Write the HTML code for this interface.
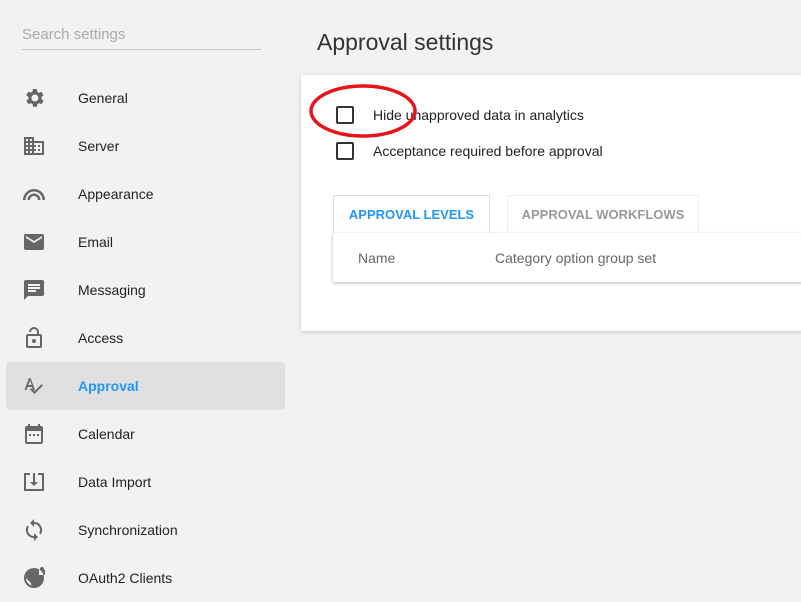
<!DOCTYPE html>
<html><head><meta charset="utf-8"><style>
*{margin:0;padding:0;box-sizing:border-box}
body{width:801px;height:584px;overflow:hidden;background:#f2f2f2;font-family:"Liberation Sans",Arial,sans-serif;position:relative;color:#222}
.search{position:absolute;left:22px;top:26px;font-size:15px;color:#aaa}
.sline{position:absolute;left:22px;top:49px;width:239px;height:1px;background:#c4c4c4}
.item{position:absolute;left:6px;width:279px;height:48px;font-size:14px;color:#222}
.item span{position:absolute;left:72px;top:16px}
.item svg{position:absolute;left:16px;top:12px;width:24px;height:24px;fill:#666}
.item.sel{background:#e0e0e0;border-radius:4px}
.item.sel span{color:#2196f3;font-weight:bold}
h1{position:absolute;left:317px;top:29px;font-size:23px;font-weight:normal;color:#333}
.card{position:absolute;left:301px;top:75px;width:510px;height:256px;background:#fff;box-shadow:0 1px 4px rgba(0,0,0,.2)}
.cb{position:absolute;width:18px;height:18px;border:2px solid #333;border-radius:2px}
.lbl{position:absolute;font-size:14px;color:#222}
.tab{position:absolute;top:195px;height:39px;background:#fff;border:1px solid #ddd;border-bottom:none;font-size:13px;font-weight:bold;text-align:center;line-height:38px}
.tbl{position:absolute;left:333px;top:233px;width:480px;height:49px;background:#fff;box-shadow:0 1px 3px rgba(0,0,0,.3)}
.th{position:absolute;top:250px;font-size:14px;color:#666}
</style></head><body>
<div class="search">Search settings</div><div class="sline"></div>
<div class="item" style="top:74px"><svg viewBox="0 0 24 24"><path d="M19.4 13a7.5 7.5 0 000-2l2.1-1.6-2-3.5-2.5 1a7.6 7.6 0 00-1.700-1L14.9 3h-4l-.4 2.6a7.6 7.6 0 00-1.7 1l-2.5-1-2 3.5L6.5 11a7.5 7.5 0 000 2l-2.1 1.6 2 3.5 2.5-1a7.6 7.6 0 001.7 1l.4 2.6h4l.4-2.6a7.6 7.6 0 001.7-1l2.5 1 2-3.5zM12.9 15.5a3.5 3.5 0 110-7 3.5 3.5 0 010 7z"/></svg><span>General</span></div>
<div class="item" style="top:122px"><svg viewBox="0 0 24 24"><path d="M12 7V3H2v18h20V7H12zM6 19H4v-2h2v2zm0-4H4v-2h2v2zm0-4H4V9h2v2zm0-4H4V5h2v2zm4 12H8v-2h2v2zm0-4H8v-2h2v2zm0-4H8V9h2v2zm0-4H8V5h2v2zm10 12h-8v-2h2v-2h-2v-2h2v-2h-2V9h8v10zm-2-8h-2v2h2v-2zm0 4h-2v2h2v-2z"/></svg><span>Server</span></div>
<div class="item" style="top:170px"><svg viewBox="0 0 24 24"><path d="M1 18a11 11 0 0122 0h-2.5a8.5 8.5 0 00-17 0zM5.5 18a6.5 6.5 0 0113 0H16a4 4 0 00-8 0z"/></svg><span>Appearance</span></div>
<div class="item" style="top:218px"><svg viewBox="0 0 24 24"><path d="M20 4H4a2 2 0 00-2 2v12a2 2 0 002 2h16a2 2 0 002-2V6a2 2 0 00-2-2zm0 4l-8 5-8-5V6l8 5 8-5z"/></svg><span>Email</span></div>
<div class="item" style="top:266px"><svg viewBox="0 0 24 24"><path d="M20 2H4a2 2 0 00-2 2v18l4-4h14a2 2 0 002-2V4a2 2 0 00-2-2zM6 9h12v2H6zm8 5H6v-2h8zm4-6H6V6h12z"/></svg><span>Messaging</span></div>
<div class="item" style="top:314px"><svg viewBox="0 0 24 24"><path d="M12 17a2 2 0 100-4 2 2 0 000 4zm6-9h-1V6a5 5 0 00-10 0h2a3 3 0 016 0v2H6a2 2 0 00-2 2v10a2 2 0 002 2h12a2 2 0 002-2V10a2 2 0 00-2-2zm0 12H6V10h12z"/></svg><span>Access</span></div>
<div class="item sel" style="top:362px"><svg viewBox="0 0 24 24"><path d="M2.5 16L7 4h1.5l4.5 12h-2l-1.1-3H5.6l-1.1 3zm3.8-5h3.4L8 6.3zM21 11.5l-8.5 8.5L8 15.5l1.4-1.4 3.1 3.1 7.1-7.1z"/></svg><span>Approval</span></div>
<div class="item" style="top:410px"><svg viewBox="0 0 24 24"><path d="M19 4h-1V2h-2v2H8V2H6v2H5a2 2 0 00-2 2v14a2 2 0 002 2h14a2 2 0 002-2V6a2 2 0 00-2-2zm0 16H5V9h14zM7 12h2v2H7zm4 0h2v2h-2zm4 0h2v2h-2z"/></svg><span>Calendar</span></div>
<div class="item" style="top:458px"><svg viewBox="0 0 24 24"><path d="M2 3h6v2H4v14h16V5h-4V3h6v18H2zm9 0h2v9h3l-4 4-4-4h3z"/></svg><span>Data Import</span></div>
<div class="item" style="top:506px"><svg viewBox="0 0 24 24"><path d="M12 4V1L8 5l4 4V6a6 6 0 015.2 9l1.5 1.5A8 8 0 0012 4zm0 14a6 6 0 01-5.2-9L5.3 7.5A8 8 0 0012 20v3l4-4-4-4z"/></svg><span>Synchronization</span></div>
<div class="item" style="top:554px"><svg viewBox="0 0 24 24"><path d="M12 2a10 10 0 100 20 10 10 0 000-20zm-1 17.9A8 8 0 014 12l5 5v1a2 2 0 002 2zM20 4h-2V3a2 2 0 014 0v1zm-3 0h6v5h-6z"/></svg><span>OAuth2 Clients</span></div>
<h1>Approval settings</h1>
<div class="card"></div>
<div class="cb" style="left:336px;top:106px"></div>
<div class="lbl" style="left:373px;top:107px">Hide unapproved data in analytics</div>
<div class="cb" style="left:336px;top:142px"></div>
<div class="lbl" style="left:373px;top:143px">Acceptance required before approval</div>
<div class="tab" style="left:333px;width:157px;color:#2196f3">APPROVAL LEVELS</div>
<div class="tab" style="left:507px;width:192px;color:#999;border-color:#eee">APPROVAL WORKFLOWS</div>
<div class="tbl"></div>
<div class="th" style="left:358px">Name</div>
<div class="th" style="left:495px">Category option group set</div>
<svg style="position:absolute;left:300px;top:80px" width="130" height="62"><ellipse cx="63" cy="31" rx="52" ry="25" fill="none" stroke="#e8141c" stroke-width="3.5"/></svg>
</body></html>
